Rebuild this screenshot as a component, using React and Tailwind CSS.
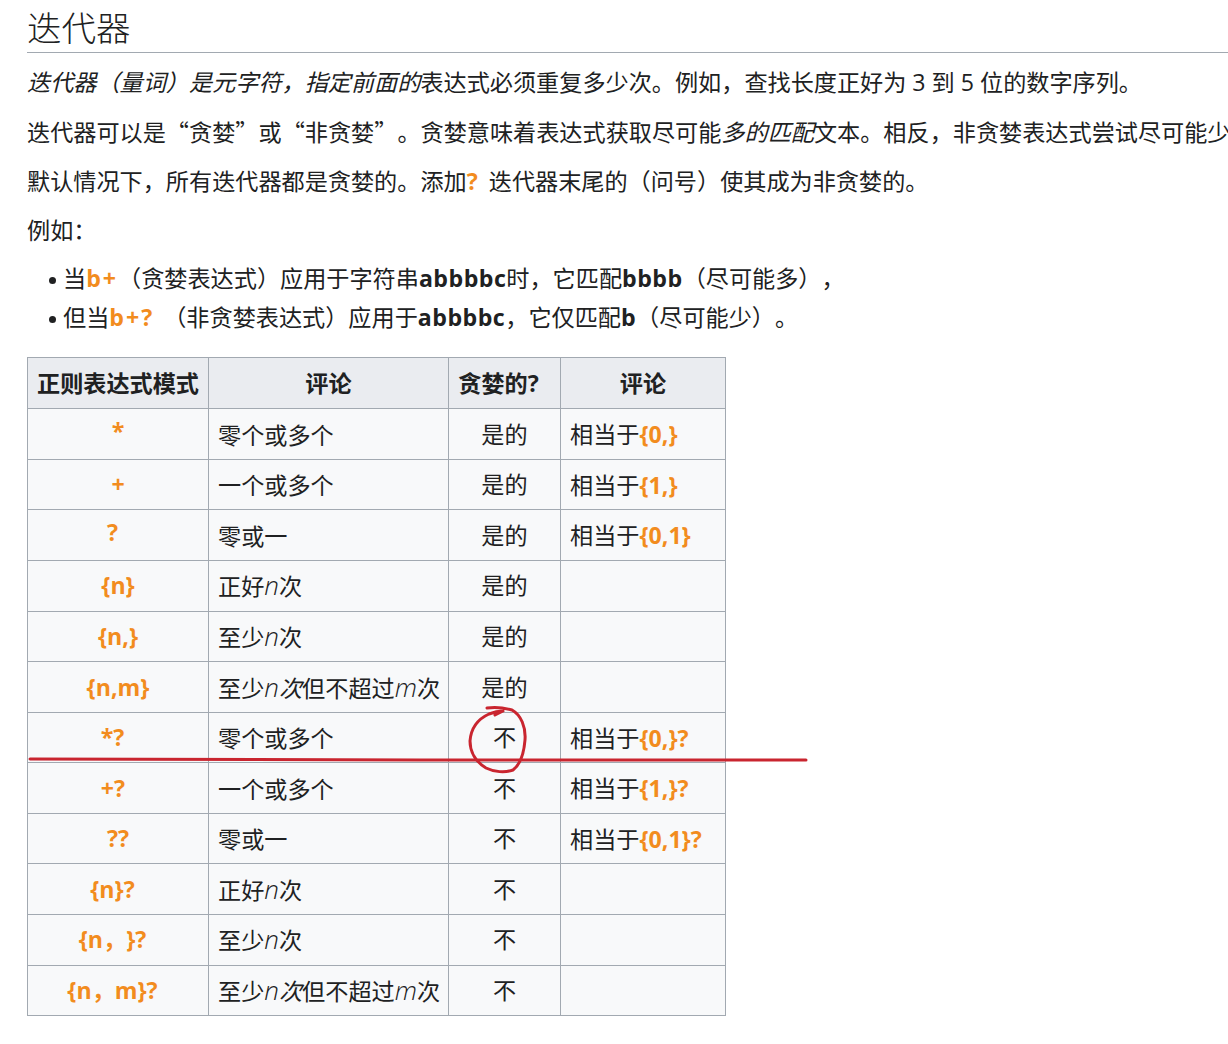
const N = ({ children }) => <em className="text-[26px] font-light leading-none">{children}</em>;

const rows = [
  { op: "*", opCls: "pb-[5px]", text: <>零个或多个</>, yes: "是的", eq: "{0,}" },
  { op: "+", opCls: "", text: <>一个或多个</>, yes: "是的", eq: "{1,}" },
  { op: "?", opCls: "pb-[5px] pr-[11px]", text: <>零或一</>, yes: "是的", eq: "{0,1}" },
  { op: "{n}", opCls: "", text: <>正好<N>n</N>次</>, yes: "是的", eq: "" },
  { op: "{n,}", opCls: "", text: <>至少<N>n</N>次</>, yes: "是的", eq: "" },
  { op: "{n,m}", opCls: "", text: <>至少<N>n</N><em>次</em>但不超过<N>m</N>次</>, yes: "是的", eq: "" },
  { op: "*?", opCls: "pr-[11px]", text: <>零个或多个</>, yes: "不", eq: "{0,}?" },
  { op: "+?", opCls: "pr-[10px]", text: <>一个或多个</>, yes: "不", eq: "{1,}?" },
  { op: "??", opCls: "", text: <>零或一</>, yes: "不", eq: "{0,1}?" },
  { op: "{n}?", opCls: "pr-[11px]", text: <>正好<N>n</N>次</>, yes: "不", eq: "" },
  { op: "{n，}?", opCls: "pr-[11px]", text: <>至少<N>n</N>次</>, yes: "不", eq: "" },
  { op: "{n，m}?", opCls: "pr-[11px]", text: <>至少<N>n</N><em>次</em>但不超过<N>m</N>次</>, yes: "不", eq: "" },
];

function Op({ children, wide }) {
  return <b className={wide ? "font-bold text-[#f28c1e] tracking-[2px]" : "font-bold text-[#f28c1e]"}>{children}</b>;
}

// bold sample strings in the list run a bit wider than the body text
const Sample = ({ children }) => <b className="font-bold tracking-[0.5px]">{children}</b>;

// curly quotes have to come from the CJK face to be full width
const Q = ({ children }) => <span className="font-['Noto_Sans_CJK_SC']">{children}</span>;

const Bullet = () => <span className="mr-[7px] mt-[4px] h-[7px] w-[7px] shrink-0 rounded-full bg-[#202122]" />;

export default function App() {
  return (
    <div lang="zh-CN" className="relative w-[1228px] h-[1044px] overflow-hidden bg-white pl-[27px] text-[23.15px] text-[#202122] font-['Open_Sans','Noto_Sans_CJK_SC',sans-serif] whitespace-nowrap [text-spacing-trim:space-all]">
      <h1 className="h-[53px] border-b border-[#a2a9b1] text-[34.5px] leading-[56px] font-extralight">迭代器</h1>

      <div className="pt-[5.4px] leading-[48.7px]">
        <p><em>迭代器（量词）是元字符，指定前面的</em>表达式必须重复多少次。例如，查找长度正好为 3 到 5 位的数字序列。</p>
        <p>迭代器可以是<Q>“</Q>贪婪<Q>”</Q>或<Q>“</Q>非贪婪<Q>”</Q>。贪婪意味着表达式获取尽可能<em>多的匹配</em>文本。相反，非贪婪表达式尝试尽可能少</p>
        <p>默认情况下，所有迭代器都是贪婪的。添加<Op>?</Op><span className="ml-[11px]">迭代器末尾的（问号）使其成为非贪婪的。</span></p>
        <p>例如：</p>
      </div>

      <ul className="mt-[5px] pl-[22px] leading-[39px]">
        <li className="flex items-center">
          <Bullet />
          <span>当<Op wide>b+</Op>（贪婪表达式）应用于字符串<Sample>abbbbc</Sample>时，它匹配<Sample>bbbb</Sample>（尽可能多），</span>
        </li>
        <li className="flex items-center">
          <Bullet />
          <span>但当<Op wide>b+?</Op><span className="ml-[9px]">（非贪婪表达式）应用于</span><Sample>abbbbc</Sample>，它仅匹配<Sample>b</Sample>（尽可能少）。</span>
        </li>
      </ul>

      <table className="mt-[20px] w-[698px] table-fixed border-collapse border border-[#a2a9b1] bg-[#f8f9fa]">
        <colgroup>
          <col className="w-[181px]" />
          <col className="w-[240px]" />
          <col className="w-[112px]" />
          <col className="w-[165px]" />
        </colgroup>
        <thead>
          <tr className="h-[51px] bg-[#eaecf0] text-center">
            <th className="border border-[#a2a9b1] font-bold">正则表达式模式</th>
            <th className="border border-[#a2a9b1] font-bold">评论</th>
            <th className="border border-[#a2a9b1] pr-[12px] font-bold">贪婪的?</th>
            <th className="border border-[#a2a9b1] font-bold">评论</th>
          </tr>
        </thead>
        <tbody>
          {rows.map((r) => (
            <tr key={r.op} className="h-[50.58px]">
              <td className={`border border-[#a2a9b1] text-center ${r.opCls}`}><Op>{r.op}</Op></td>
              <td className="border border-[#a2a9b1] pl-[9px] pt-[2px]">{r.text}</td>
              <td className="border border-[#a2a9b1] text-center">{r.yes}</td>
              <td className="border border-[#a2a9b1] pl-[9px] pt-[1px]">
                {r.eq && <>相当于<Op>{r.eq}</Op></>}
              </td>
            </tr>
          ))}
        </tbody>
      </table>

      {/* red pen marks */}
      <svg className="absolute left-0 top-0 pointer-events-none" width="1228" height="1044" fill="none" stroke="#c9252f" strokeLinecap="round" strokeLinejoin="round">
        <path d="M30 759 L420 760 L806 760" strokeWidth="3" />
        <path d="M487 708 C494 707 505 708 512 710 C521 715 526 727 525 740 C524 752 521 764 513 770 C505 773 494 772 486 768 C476 762 470 752 470 741 C471 728 478 719 489 714 C494 712 499 711 503 711 M503 711 L495 715" strokeWidth="3" />
      </svg>
    </div>
  );
}
